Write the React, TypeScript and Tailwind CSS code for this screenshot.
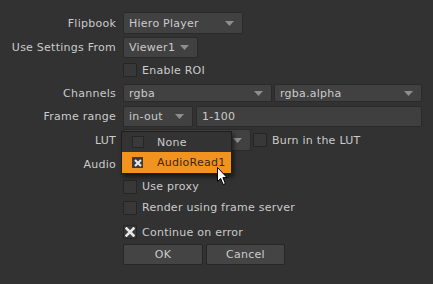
import React from "react";

const font = { fontFamily: '"DejaVu Sans", Verdana, sans-serif' };

function Arrow() {
  return (
    <svg width="9" height="5" viewBox="0 0 9 5" className="shrink-0">
      <path d="M0 0 H9 L4.5 5 Z" fill="#8e8e8e" />
    </svg>
  );
}

function Dropdown({ value, w, h }: { value: string; w: string; h: string }) {
  return (
    <div
      className={`flex items-center justify-between rounded-[2px] border border-[#2a2a2a] bg-[#414141] pl-[5px] pr-[8px] ${w} ${h}`}
    >
      <span className="truncate">{value}</span>
      <Arrow />
    </div>
  );
}

function Cross({ color = "#e6e6e6" }: { color?: string }) {
  return (
    <svg width="10" height="10" viewBox="0 0 10 10">
      <path d="M1.5 1.5 L8.5 8.5 M8.5 1.5 L1.5 8.5" stroke={color} strokeWidth="2.6" strokeLinecap="square" />
    </svg>
  );
}

function Check({ checked, label }: { checked?: boolean; label: string }) {
  return (
    <div className="flex items-center gap-[5px]">
      <div className="flex h-[14px] w-[14px] items-center justify-center rounded-[1px] border border-[#252525] bg-[#383838]">
        {checked && <Cross />}
      </div>
      <span>{label}</span>
    </div>
  );
}

function Row({ label, className, children }: { label?: string; className: string; children?: React.ReactNode }) {
  return (
    <div className={`grid grid-cols-[116px_1fr] items-center gap-x-[7px] ${className}`}>
      <div className="text-right">{label}</div>
      <div className="relative flex items-center">{children}</div>
    </div>
  );
}

export default function App() {
  return (
    <div
      className="h-[284px] w-[433px] overflow-hidden bg-[#323232] pt-[12px] text-[11px] leading-none tracking-[0.25px] text-[#cbcbcb]"
      style={font}
    >
      <Row label="Flipbook" className="h-[22px]">
        <Dropdown value="Hiero Player" w="w-[120px]" h="h-[22px]" />
      </Row>
      <Row label="Use Settings From" className="mt-[3px] h-[21px]">
        <Dropdown value="Viewer1" w="w-[75px]" h="h-[21px]" />
      </Row>
      <Row className="mt-[2px] h-[20px]">
        <Check label="Enable ROI" />
      </Row>
      <Row label="Channels" className="mt-[4px] h-[18px]">
        <div className="flex gap-[2px]">
          <Dropdown value="rgba" w="w-[149px]" h="h-[18px]" />
          <Dropdown value="rgba.alpha" w="w-[148px]" h="h-[18px]" />
        </div>
      </Row>
      <Row label="Frame range" className="mt-[4px] h-[21px]">
        <div className="flex gap-[3px]">
          <Dropdown value="in-out" w="w-[70px]" h="h-[21px]" />
          <div className="flex h-[21px] w-[226px] items-center rounded-[2px] border border-[#2a2a2a] bg-[#3f3f3f] px-[5px]">
            1-100
          </div>
        </div>
      </Row>
      <Row label="LUT" className="mt-[2px] h-[22px]">
        <div className="flex items-center gap-[2px]">
          <Dropdown value="" w="w-[128px]" h="h-[22px]" />
          <Check label="Burn in the LUT" />
        </div>
        {/* popup menu */}
        <div className="absolute left-[-2px] top-[2px] z-10 w-[111px] border border-[#1e1e1e] bg-[#333333] shadow-[2px_3px_4px_rgba(0,0,0,0.5)]">
          <div className="flex h-[20px] items-center pl-[10px]">
            <div className="h-[12px] w-[12px] border border-[#262626] bg-[#3a3a3a]" />
            <span className="ml-[13px]">None</span>
          </div>
          <div className="flex h-[21px] items-center bg-[#f3931f] pl-[10px] text-[#3a2a12]">
            <div className="flex h-[11px] w-[11px] items-center justify-center bg-[#3b3b3b]">
              <svg width="8" height="8" viewBox="0 0 8 8">
                <path d="M1 1 L7 7 M7 1 L1 7" stroke="#e8e8e8" strokeWidth="2.2" />
              </svg>
            </div>
            <span className="ml-[14px]">AudioRead1</span>
          </div>
        </div>
        {/* mouse cursor */}
        <svg className="absolute left-[94px] top-[38px] z-20" width="12" height="19" viewBox="0 0 12 19">
          <path d="M0.5 0.5 L0.5 14.5 L3.6 11.4 L6.2 17.5 L8.4 16.6 L5.9 10.6 L10 10.6 Z" fill="#ffffff" stroke="#000000" strokeWidth="1" />
        </svg>
      </Row>
      <Row label="Audio" className="mt-[2px] h-[22px]" />
      <Row className="mt-[2px] h-[19px]">
        <Check label="Use proxy" />
      </Row>
      <Row className="mt-[2px] h-[19px]">
        <Check label="Render using frame server" />
      </Row>
      <Row className="mt-[5px] h-[20px]">
        <Check checked label="Continue on error" />
      </Row>
      <Row className="mt-[2px] h-[21px]">
        <div className="flex gap-[3px]">
          <button className="h-[21px] w-[80px] rounded-[2px] border border-[#262626] bg-[#444444] text-[#cbcbcb]">
            OK
          </button>
          <button className="h-[21px] w-[79px] rounded-[2px] border border-[#262626] bg-[#444444] text-[#cbcbcb]">
            Cancel
          </button>
        </div>
      </Row>
    </div>
  );
}
